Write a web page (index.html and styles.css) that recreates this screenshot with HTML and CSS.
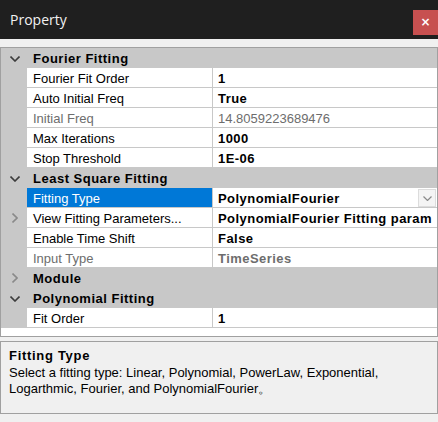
FILE: index.html
```html
<!DOCTYPE html>
<html>
<head>
<meta charset="utf-8">
<link rel="stylesheet" href="styles.css">
</head>
<body>
<div class="window">
  <div class="titlebar">
    <span class="title">Property</span>
    <span class="close">×</span>
  </div>
  <div class="grid">
    <div class="cat">
      <span class="gutter"><svg class="chev-down" width="10" height="6" viewBox="0 0 10 6"><polyline points="0.5,0.5 5,5 9.5,0.5" /></svg></span>
      <span class="cat-label">Fourier Fitting</span>
    </div>
    <div class="row"><span class="gutter"></span><span class="name">Fourier Fit Order</span><span class="value b">1</span></div>
    <div class="row"><span class="gutter"></span><span class="name">Auto Initial Freq</span><span class="value b">True</span></div>
    <div class="row"><span class="gutter"></span><span class="name dim">Initial Freq</span><span class="value dim">14.8059223689476</span></div>
    <div class="row"><span class="gutter"></span><span class="name">Max Iterations</span><span class="value b">1000</span></div>
    <div class="row"><span class="gutter"></span><span class="name">Stop Threshold</span><span class="value b">1E-06</span></div>
    <div class="cat">
      <span class="gutter"><svg class="chev-down" width="10" height="6" viewBox="0 0 10 6"><polyline points="0.5,0.5 5,5 9.5,0.5" /></svg></span>
      <span class="cat-label">Least Square Fitting</span>
    </div>
    <div class="row"><span class="gutter"></span><span class="name selected">Fitting Type</span><span class="value b">PolynomialFourier<span class="dropbtn"><svg width="9" height="5" viewBox="0 0 9 5"><polyline points="0.5,0.5 4.5,4.5 8.5,0.5" /></svg></span></span></div>
    <div class="row"><span class="gutter"><svg class="chev-right" width="6" height="10" viewBox="0 0 6 10"><polyline points="0.5,0.5 5,5 0.5,9.5" /></svg></span><span class="name">View Fitting Parameters...</span><span class="value b">PolynomialFourier Fitting param</span></div>
    <div class="row"><span class="gutter"></span><span class="name">Enable Time Shift</span><span class="value b">False</span></div>
    <div class="row"><span class="gutter"></span><span class="name dim">Input Type</span><span class="value dim b">TimeSeries</span></div>
    <div class="cat">
      <span class="gutter"><svg class="chev-right" width="6" height="10" viewBox="0 0 6 10"><polyline points="0.5,0.5 5,5 0.5,9.5" /></svg></span>
      <span class="cat-label">Module</span>
    </div>
    <div class="cat">
      <span class="gutter"><svg class="chev-down" width="10" height="6" viewBox="0 0 10 6"><polyline points="0.5,0.5 5,5 9.5,0.5" /></svg></span>
      <span class="cat-label">Polynomial Fitting</span>
    </div>
    <div class="row"><span class="gutter"></span><span class="name">Fit Order</span><span class="value b">1</span></div>
    <div class="grid-fill"></div>
  </div>
  <div class="desc">
    <div class="desc-title">Fitting Type</div>
    <div class="desc-text">Select a fitting type: Linear, Polynomial, PowerLaw, Exponential, Logarthmic, Fourier, and PolynomialFourier。</div>
  </div>
</div>
</body>
</html>
```

FILE: styles.css
```css
html, body {
  margin: 0;
  padding: 0;
  background: #f0f0f0;
}
.window {
  width: 438px;
  height: 422px;
  display: flex;
  flex-direction: column;
  overflow: hidden;
  font-family: "Liberation Sans", Arial, sans-serif;
  font-size: 13px;
  color: #000;
}
.titlebar {
  height: 39px;
  flex: none;
  background: #1f1f1f;
  display: flex;
  align-items: center;
  padding-left: 10px;
  box-sizing: border-box;
}
.title {
  font-family: "Open Sans", "Noto Sans", sans-serif;
  font-size: 14px;
  color: #f2f2f2;
  margin-top: -1px;
}
.close {
  margin-left: auto;
  align-self: flex-start;
  margin-top: 10px;
  width: 25px;
  height: 25px;
  background: #c75050;
  color: #fff;
  font-family: "DejaVu Sans", sans-serif;
  font-size: 12px;
  font-weight: bold;
  line-height: 25px;
  text-align: center;
}
.grid {
  margin-top: 8px;
  flex: none;
  border: 1px solid #a0a0a0;
  background: #fff;
  display: flex;
  flex-direction: column;
}
.cat, .row {
  display: flex;
  height: 20px;
  background: #c8c8c8;
}
.gutter {
  width: 26px;
  flex: none;
  display: flex;
  align-items: center;
  justify-content: center;
}
.cat-label {
  font-weight: bold;
  letter-spacing: 0.5px;
  padding-left: 6px;
  line-height: 19px;
  padding-top: 1px;
  white-space: nowrap;
}
.chev-down polyline {
  fill: none;
  stroke: #3c3c3c;
  stroke-width: 1.6;
}
.chev-down {
  margin-left: 2px;
  margin-top: 1px;
}
.chev-right polyline {
  fill: none;
  stroke: #8a8a8a;
  stroke-width: 1.6;
}
.chev-right {
  margin-left: 2px;
}
.name {
  width: 185px;
  flex: none;
  height: 19px;
  background: #fff;
  padding-left: 6px;
  box-sizing: border-box;
  line-height: 19px;
  padding-top: 1px;
  white-space: nowrap;
  overflow: hidden;
}
.name.selected {
  background: #0078d7;
  color: #fff;
}
.value {
  flex: 1;
  min-width: 0;
  height: 19px;
  margin-left: 1px;
  background: #fff;
  padding-left: 5px;
  box-sizing: border-box;
  line-height: 19px;
  padding-top: 1px;
  white-space: nowrap;
  overflow: hidden;
  position: relative;
}
.b {
  font-weight: bold;
  letter-spacing: 0.45px;
}
.dim {
  color: #6d6d6d;
}
.dropbtn {
  position: absolute;
  right: 1px;
  top: 1px;
  width: 18px;
  height: 18px;
  box-sizing: border-box;
  background: #f4f4f4;
  border: 1px solid #dcdcdc;
  display: flex;
  align-items: center;
  justify-content: center;
}
.dropbtn polyline {
  fill: none;
  stroke: #8a8a8a;
  stroke-width: 1.2;
}
.grid-fill {
  height: 8px;
  background: #fff;
}
.desc {
  margin-top: 4px;
  flex: none;
  height: 73px;
  box-sizing: border-box;
  border: 1px solid #a0a0a0;
  background: #f0f0f0;
  padding: 5px 8px 0 8px;
}
.desc-title {
  font-weight: bold;
  letter-spacing: 0.7px;
  line-height: 17px;
  margin-bottom: 1px;
}
.desc-text {
  line-height: 16px;
  color: #000;
}
```
